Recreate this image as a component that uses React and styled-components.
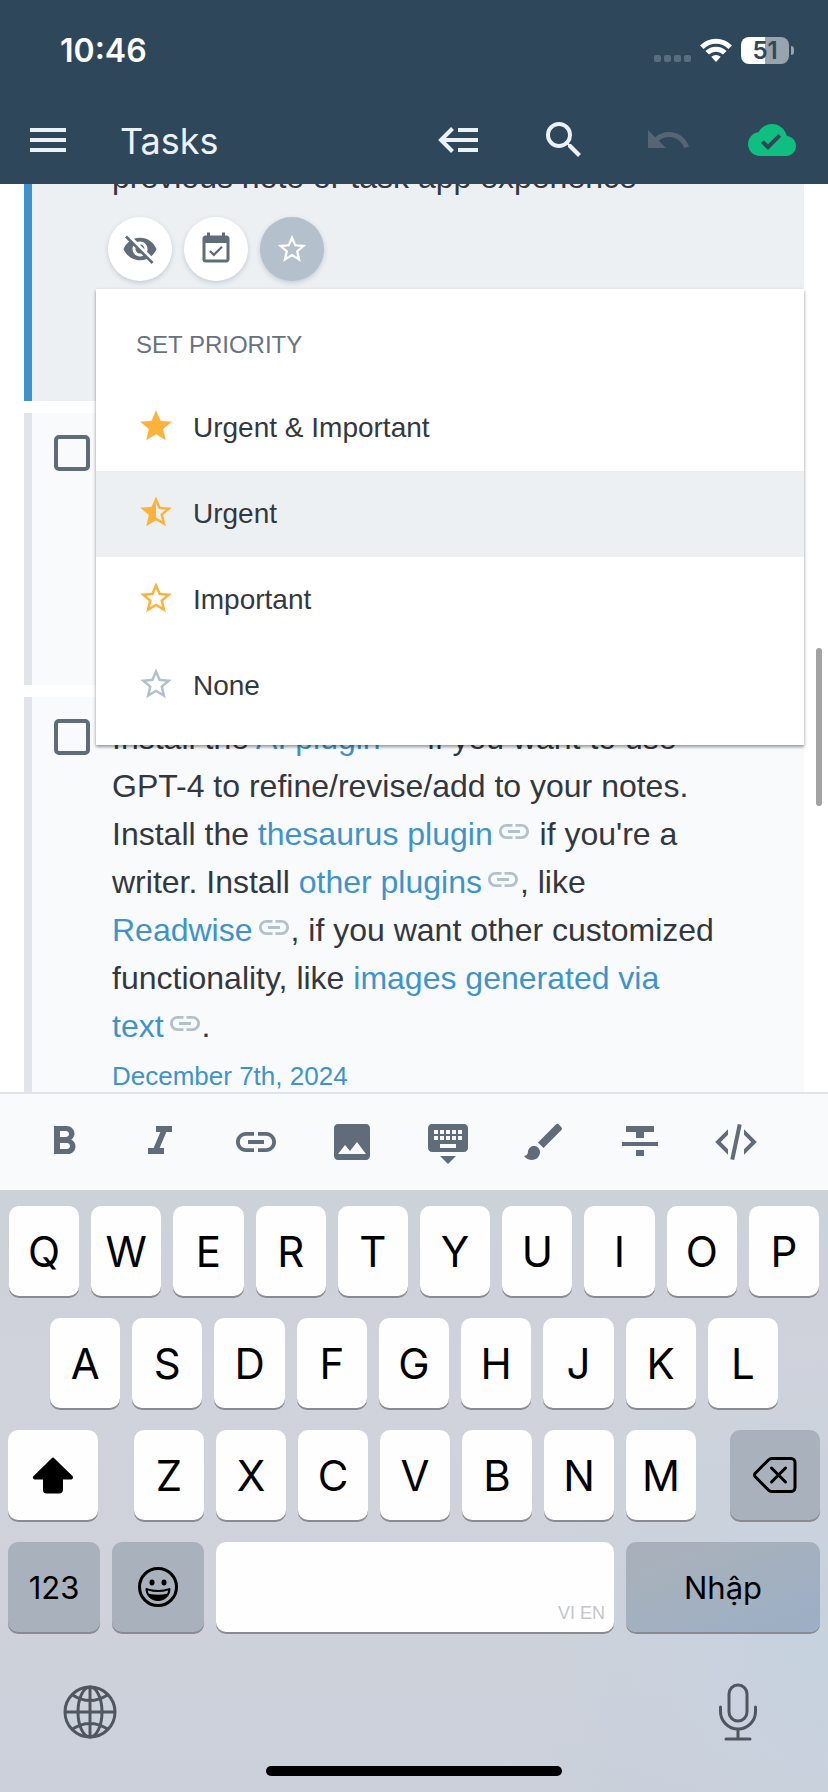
import React from "react";
import styled, { createGlobalStyle, css } from "styled-components";
import {
  MdMenu,
  MdSearch,
  MdUndo,
  MdCloudDone,
  MdVisibilityOff,
  MdEventAvailable,
  MdStar,
  MdStarHalf,
  MdStarBorder,
  MdFormatBold,
  MdFormatItalic,
  MdLink,
  MdImage,
  MdKeyboardHide,
  MdBrush,
  MdFormatStrikethrough,
} from "react-icons/md";

const sans = `"Liberation Sans", Arial, Helvetica, sans-serif`;
const system = `Inter, "Noto Sans", sans-serif`;

const color = {
  header: "#2f475a",
  headerText: "#ecf1f6",
  slate: "#606c79",
  text: "#333840",
  link: "#3f93cc",
  muted: "#b5c0cd",
  card: "#f9fafc",
  active: "#ecf0f3",
  line: "#e1e5e9",
  amber: "#fdb23c",
  key: "#a9b1bd",
};

const GlobalStyle = createGlobalStyle`
  *, *::before, *::after { box-sizing: border-box; }
  body { margin: 0; background: #fff; font-family: ${sans}; color: ${color.text}; }
  button { margin: 0; padding: 0; border: 0; background: none; font: inherit; color: inherit; cursor: pointer; }
  svg { display: block; }
`;

const Screen = styled.div`
  display: flex;
  flex-direction: column;
  height: 100vh;
  min-height: 1400px;
  overflow: hidden;
`;

const Header = styled.header`
  flex: none;
  height: 184px;
  background: ${color.header};
  color: ${color.headerText};
`;

const StatusBar = styled.div`
  display: flex;
  align-items: center;
  height: 96px;
  padding: 4px 34px 0 60px;
  font-family: ${system};
`;

const Clock = styled.time`
  flex: 1;
  font-size: 32px;
  font-weight: 600;
  color: #fff;
`;

const StatusIcons = styled.div`
  display: flex;
  align-items: center;
  gap: 9px;
`;

const Signal = styled.div`
  display: flex;
  align-self: flex-end;
  gap: 3px;
  margin-bottom: 2px;

  i {
    width: 7px;
    height: 7px;
    border-radius: 2px;
    background: #5a6d7c;
  }
`;

const Battery = styled.div`
  display: flex;
  align-items: center;
  gap: 2px;
`;

const BatteryLevel = styled.span`
  width: 48px;
  height: 27px;
  border-radius: 8px;
  background: linear-gradient(to right, #fff 50%, #97a3ad 50%);
  color: ${color.header};
  font-size: 24px;
  line-height: 27px;
  font-weight: 600;
  text-align: center;
`;

const BatteryTip = styled.span`
  width: 3px;
  height: 9px;
  border-radius: 0 3px 3px 0;
  background: #97a3ad;
`;

const AppBar = styled.nav`
  display: flex;
  align-items: center;
  height: 88px;
  padding: 0 32px 0 24px;
`;

const Title = styled.h1`
  flex: 1;
  margin: 2px 0 0 48px;
  font-family: ${system};
  font-size: 36px;
  font-weight: 400;
`;

const BarActions = styled.div`
  display: flex;
  gap: 56px;
`;

const IconButton = styled.button`
  display: grid;
  place-items: center;
  width: ${(p) => p.$size || 48}px;
  height: ${(p) => p.$size || 48}px;
  color: ${(p) => p.$color || "inherit"};
`;

const Content = styled.main`
  position: relative;
  flex: 1;
  min-height: 0;
  overflow: hidden;
  background: #fff;
`;

/* The list is scrolled: the top of its first card lies under the header. */
const TaskList = styled.ul`
  display: flex;
  flex-direction: column;
  gap: 12px;
  list-style: none;
  margin: -96px 24px 0;
  padding: 0;
`;

const Card = styled.li`
  position: relative;
  display: flex;
  align-items: flex-start;
  gap: 22px;
  min-height: ${(p) => p.$minHeight || 0}px;
  padding: 17px 64px 16px 22px;
  border-left: 8px solid ${(p) => (p.$active ? color.link : color.line)};
  background: ${(p) => (p.$active ? color.active : color.card)};
`;

const Checkbox = styled.input`
  appearance: none;
  flex: none;
  width: 36px;
  height: 36px;
  margin: 5px 0 0;
  border: 4px solid ${color.slate};
  border-radius: 5px;
`;

const TaskBody = styled.div`
  flex: 1;
  padding-top: ${(p) => p.$lead || 0}px;
`;

const TaskText = styled.p`
  margin: 0;
  font-size: 32px;
  line-height: 48px;
`;

const Anchor = styled.a`
  color: ${color.link};
  text-decoration: none;
`;

const Keep = styled.span`
  white-space: nowrap;
`;

const LinkMark = styled.svg`
  display: inline-block;
  width: 30px;
  height: 15px;
  margin: 0 2px 0 6px;
  vertical-align: 6px;
  fill: ${color.muted};
`;

const DateLink = styled(Anchor)`
  display: block;
  font-size: 26px;
  line-height: 52px;
`;

const RoundActions = styled.div`
  display: flex;
  gap: 12px;
  margin: 16px 0 0 -4px;
`;

const RoundButton = styled.button`
  display: grid;
  place-items: center;
  width: 64px;
  height: 64px;
  border-radius: 50%;
  background: ${(p) => (p.$pressed ? color.muted : "#fff")};
  color: ${(p) => (p.$pressed ? "#fff" : color.slate)};
  box-shadow: 0 2px 5px rgba(40, 60, 80, 0.2);
`;

const Menu = styled.div`
  position: absolute;
  z-index: 2;
  top: 201px;
  left: 64px;
  right: 0;
  padding-bottom: 16px;
  background: #fff;
  box-shadow: 0 2px 3px rgba(0, 0, 0, 0.35), 0 1px 4px rgba(0, 0, 0, 0.1);
`;

const MenuTitle = styled.h2`
  margin: 0;
  padding: 16px 40px 0;
  font-size: 24px;
  font-weight: 400;
  line-height: 80px;
  color: #68727f;
`;

const MenuItem = styled.button`
  display: flex;
  align-items: center;
  gap: 18px;
  width: 100%;
  height: 86px;
  padding: 0 41px;
  background: ${(p) => (p.$selected ? color.active : "transparent")};
  font-size: 28px;
  text-align: left;

  svg {
    margin-bottom: 4px;
    color: ${(p) => p.$tint};
  }
`;

const ScrollThumb = styled.span`
  position: absolute;
  z-index: 3;
  top: 464px;
  right: 6px;
  width: 6px;
  height: 158px;
  border-radius: 3px;
  background: #a2a2a3;
`;

const FormatBar = styled.div`
  flex: none;
  display: flex;
  align-items: center;
  gap: 48px;
  height: 98px;
  padding: 0 40px;
  border-top: 2px solid ${color.line};
  background: ${color.card};
  color: ${color.slate};
`;

const Keyboard = styled.section`
  flex: none;
  display: flex;
  flex-direction: column;
  gap: 22px;
  padding: 16px 8px;
  background: radial-gradient(circle at 100% 75%, #c6d2df 0, rgba(198, 210, 223, 0) 300px),
    linear-gradient(#cdd1d8, #d0d2dc 30%, #cfd2db 65%, #cbd0da);
  font-family: ${system};
  color: #000;
`;

const KeyRow = styled.div`
  display: flex;
  justify-content: center;
  gap: 12px;
  padding: 0 ${(p) => p.$inset || 0}px;
`;

const Letters = styled.div`
  flex: 562 1 0;
  display: flex;
  gap: 12px;
  margin: 0 22px 0 24px;
`;

const Key = styled.button`
  flex: ${(p) => p.$grow || 1} 1 0;
  display: grid;
  place-items: center;
  min-width: 0;
  height: 90px;
  border-radius: 10px;
  background: ${(p) => (p.$dark ? color.key : "#fefefe")};
  box-shadow: 0 2px 0 #898b90;
  font-size: ${(p) => (p.$small ? 31 : 42)}px;
  ${(p) =>
    p.$enter &&
    css`
      background: linear-gradient(160deg, #a8b1bb 20%, #9cafc7);
    `}
`;

const SpaceKey = styled(Key)`
  place-items: end;
`;

const Languages = styled.span`
  padding: 0 9px 8px;
  font-family: ${sans};
  font-size: 18px;
  color: #c6c6c8;
`;

const KeyboardFoot = styled.div`
  display: flex;
  justify-content: space-between;
  padding: 28px 52px 2px;
  color: #50565f;
`;

const HomeBar = styled.div`
  align-self: center;
  width: 296px;
  height: 10px;
  border-radius: 5px;
  background: #000;
`;

function WifiIcon() {
  return (
    <svg width="32" height="24" viewBox="0 0 32 24" fill="none" stroke="#fff" strokeWidth="5">
      <path d="M1.8 9.2a20 20 0 0 1 28.4 0" />
      <path d="M7.2 14.8a12.4 12.4 0 0 1 17.6 0" />
      <path d="M16 24l-4.700-5.200a7 7 0 0 1 9.400 0z" fill="#fff" stroke="none" />
    </svg>
  );
}

function OutdentIcon() {
  return (
    <svg width="48" height="48" viewBox="0 0 48 48" fill="none" stroke="currentColor" strokeWidth="4">
      <path d="M16.500 12.500L5 24l11.500 11.500M6 24h36M22 14h20M22 34h20" />
    </svg>
  );
}

function CodeIcon() {
  return (
    <svg width="48" height="48" viewBox="0 0 24 24" fill="currentColor">
      <path d="M12.890 3l1.960.4L11.110 21l-1.960-.4L12.890 3M19.590 12L16 8.410V5.580L22.420 12 16 18.410v-2.830L19.590 12M1.580 12L8 5.580v2.830L4.410 12 8 15.580v2.830L1.580 12z" />
    </svg>
  );
}

function ShiftIcon() {
  return (
    <svg width="44" height="38" viewBox="0 0 44 38">
      <path
        d="M22 2.500L41 21a1 1 0 0 1-.7 1.500H31V34a2.500 2.500 0 0 1-2.500 2.500h-13A2.500 2.500 0 0 1 13 34V22.500H3.700A1 1 0 0 1 3 21z"
        stroke="#000"
        strokeWidth="2"
        strokeLinejoin="round"
      />
    </svg>
  );
}

function DeleteIcon() {
  return (
    <svg width="44" height="38" viewBox="0 0 44 38" fill="none" stroke="#000" strokeWidth="3" strokeLinecap="round" strokeLinejoin="round">
      <path d="M18.500 2.500H38a4 4 0 0 1 4 4v25a4 4 0 0 1-4 4H18.500a4 4 0 0 1-2.800-1.200L2.300 20.800a2.500 2.500 0 0 1 0-3.600L15.700 3.700a4 4 0 0 1 2.800-1.200z" />
      <path d="M18.500 12l14 14M32.500 12l-14 14" />
    </svg>
  );
}

function EmojiIcon() {
  return (
    <svg width="42" height="42" viewBox="0 0 42 42">
      <circle cx="21" cy="21" r="18.500" fill="none" stroke="#000" strokeWidth="3" />
      <ellipse cx="15" cy="16.500" rx="2.500" ry="3" />
      <ellipse cx="27" cy="16.500" rx="2.500" ry="3" />
      <path d="M9 22.500q12 4 24 0c0 7-5 12-12 12s-12-5-12-12z" stroke="#000" strokeWidth="1" />
      <path d="M10.800 24.500q10.200 3 20.400 0c-.2 1.400-.6 2.400-1 3.200q-9.200 2.300-18.400 0c-.5-1-.8-2-1-3.200z" fill={color.key} />
    </svg>
  );
}

function GlobeIcon() {
  return (
    <svg width="56" height="56" viewBox="0 0 56 56" fill="none" stroke="currentColor" strokeWidth="3">
      <circle cx="28" cy="28" r="25" />
      <ellipse cx="28" cy="28" rx="12" ry="25" />
      <path d="M28 3v50M3 28h50M10.500 11q17.500 11 35 0M10.500 45q17.500-11 35 0" />
    </svg>
  );
}

function MicIcon() {
  return (
    <svg width="40" height="58" viewBox="0 0 40 58" fill="none" stroke="currentColor" strokeWidth="3" strokeLinecap="round">
      <rect x="11" y="2" width="18" height="36" rx="9" />
      <path d="M2.500 24v4.500a17.500 17.500 0 0 0 35 0V24M20 46v10M8 56h24" />
    </svg>
  );
}

function NoteLink({ children, before = "", after = "" }) {
  return (
    <>
      {before && <Anchor href="#">{before}</Anchor>}
      <Keep>
        <Anchor href="#">
          {children}
          <LinkMark viewBox="2 7 20 10" aria-hidden="true">
            <path d="M3.900 12c0-1.710 1.390-3.100 3.100-3.100h4V7H7c-2.760 0-5 2.240-5 5s2.240 5 5 5h4v-1.900H7c-1.710 0-3.100-1.390-3.100-3.100zM8 13h8v-2H8v2zm9-6h-4v1.900h4c1.710 0 3.100 1.390 3.100 3.100s-1.390 3.100-3.100 3.100h-4V17h4c2.760 0 5-2.240 5-5s-2.240-5-5-5z" />
          </LinkMark>
        </Anchor>
        {after}
      </Keep>
    </>
  );
}

const priorities = [
  { label: "Urgent & Important", icon: MdStar, tint: color.amber },
  { label: "Urgent", icon: MdStarHalf, tint: color.amber, selected: true },
  { label: "Important", icon: MdStarBorder, tint: color.amber },
  { label: "None", icon: MdStarBorder, tint: color.muted },
];

const formats = [
  ["Bold", MdFormatBold],
  ["Italic", MdFormatItalic],
  ["Link", MdLink],
  ["Image", MdImage],
  ["Hide keyboard", MdKeyboardHide],
  ["Highlight", MdBrush],
  ["Strikethrough", MdFormatStrikethrough],
  ["Code", CodeIcon],
];

const letterKeys = (row) => row.split("").map((c) => <Key key={c}>{c}</Key>);

export default function App() {
  return (
    <Screen>
      <GlobalStyle />
      <Header>
        <StatusBar>
          <Clock>10:46</Clock>
          <StatusIcons>
            <Signal>
              <i />
              <i />
              <i />
              <i />
            </Signal>
            <WifiIcon />
            <Battery>
              <BatteryLevel>51</BatteryLevel>
              <BatteryTip />
            </Battery>
          </StatusIcons>
        </StatusBar>
        <AppBar>
          <IconButton aria-label="Menu">
            <MdMenu size={48} />
          </IconButton>
          <Title>Tasks</Title>
          <BarActions>
            <IconButton aria-label="Outdent">
              <OutdentIcon />
            </IconButton>
            <IconButton aria-label="Search">
              <MdSearch size={48} />
            </IconButton>
            <IconButton aria-label="Undo" $color="#566575">
              <MdUndo size={48} />
            </IconButton>
            <IconButton aria-label="Saved" $color="#0fbf80">
              <MdCloudDone size={48} />
            </IconButton>
          </BarActions>
        </AppBar>
      </Header>

      <Content>
        <TaskList>
          <Card $active $minHeight={313}>
            <Checkbox type="checkbox" aria-label="Complete task" />
            <TaskBody $lead={48}>
              <TaskText>previous note or task app experience</TaskText>
              <RoundActions>
                <RoundButton aria-label="Hide">
                  <MdVisibilityOff size={36} />
                </RoundButton>
                <RoundButton aria-label="Schedule">
                  <MdEventAvailable size={36} />
                </RoundButton>
                <RoundButton aria-label="Priority" $pressed>
                  <MdStarBorder size={34} />
                </RoundButton>
              </RoundActions>
            </TaskBody>
            <Menu>
              <MenuTitle>SET PRIORITY</MenuTitle>
              {priorities.map(({ label, icon: Icon, tint, selected }) => (
                <MenuItem key={label} $tint={tint} $selected={selected}>
                  <Icon size={38} />
                  {label}
                </MenuItem>
              ))}
            </Menu>
          </Card>
          <Card $minHeight={272}>
            <Checkbox type="checkbox" aria-label="Complete task" />
          </Card>
          <Card>
            <Checkbox type="checkbox" aria-label="Complete task" />
            <TaskBody>
              <TaskText>
                Install the <NoteLink before="AI ">plugin</NoteLink> if you want to use GPT-4 to
                refine/revise/add to your notes. Install the{" "}
                <NoteLink before="thesaurus ">plugin</NoteLink> if you're a writer. Install{" "}
                <NoteLink before="other " after=",">
                  plugins
                </NoteLink>{" "}
                like{" "}
                <NoteLink after=",">Readwise</NoteLink> if you want other customized functionality,
                like{" "}
                <NoteLink before="images generated via " after=".">
                  text
                </NoteLink>
              </TaskText>
              <DateLink href="#">December 7th, 2024</DateLink>
            </TaskBody>
          </Card>
        </TaskList>
        <ScrollThumb />
      </Content>

      <FormatBar role="toolbar">
        {formats.map(([label, Icon]) => (
          <IconButton key={label} aria-label={label}>
            <Icon size={48} />
          </IconButton>
        ))}
      </FormatBar>

      <Keyboard>
        <KeyRow $inset={1}>{letterKeys("QWERTYUIOP")}</KeyRow>
        <KeyRow $inset={42}>{letterKeys("ASDFGHJKL")}</KeyRow>
        <KeyRow>
          <Key $grow={90} aria-label="Shift">
            <ShiftIcon />
          </Key>
          <Letters>{letterKeys("ZXCVBNM")}</Letters>
          <Key $grow={90} $dark aria-label="Delete">
            <DeleteIcon />
          </Key>
        </KeyRow>
        <KeyRow>
          <Key $grow={92} $dark $small>
            123
          </Key>
          <Key $grow={92} $dark aria-label="Emoji">
            <EmojiIcon />
          </Key>
          <SpaceKey $grow={398}>
            <Languages>VI EN</Languages>
          </SpaceKey>
          <Key $grow={194} $dark $small $enter>
            Nhập
          </Key>
        </KeyRow>
        <KeyboardFoot>
          <IconButton $size={60} aria-label="Next keyboard">
            <GlobeIcon />
          </IconButton>
          <IconButton $size={60} aria-label="Dictate">
            <MicIcon />
          </IconButton>
        </KeyboardFoot>
        <HomeBar />
      </Keyboard>
    </Screen>
  );
}
